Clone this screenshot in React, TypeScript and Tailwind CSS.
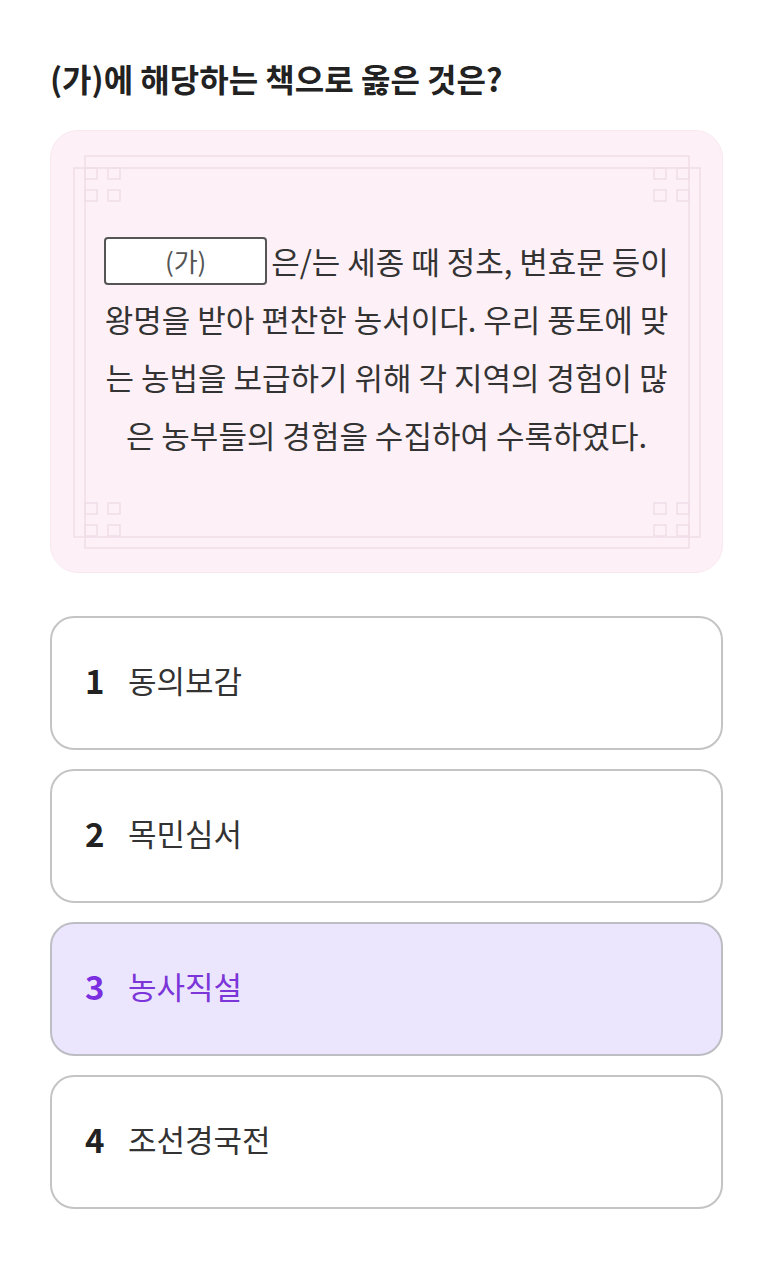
import React from 'react';

const options = [
  { no: 1, label: '동의보감' },
  { no: 2, label: '목민심서' },
  { no: 3, label: '농사직설', selected: true },
  { no: 4, label: '조선경국전' },
];

function Knot({ x, y }: { x: number; y: number }) {
  return (
    <g>
      <rect x={x} y={y} width={12} height={11} />
      <rect x={x + 23} y={y} width={12} height={11} />
      <rect x={x} y={y + 22} width={12} height={11} />
      <rect x={x + 23} y={y + 22} width={12} height={11} />
    </g>
  );
}

function Frame() {
  return (
    <svg
      className="pointer-events-none absolute inset-0"
      width="672"
      height="443"
      viewBox="0 0 672 443"
      fill="none"
      stroke="#f0dde7"
      strokeWidth="1.5"
    >
      <rect x="34" y="25" width="604" height="392" />
      <rect x="23" y="37" width="626" height="369" />
      <Knot x={34} y={37} />
      <Knot x={603} y={37} />
      <Knot x={34} y={372} />
      <Knot x={603} y={372} />
    </svg>
  );
}

export default function App() {
  return (
    <div
      className="min-h-screen bg-white px-[50px] pt-[56px] pb-10"
      style={{ fontFamily: '"Noto Sans CJK KR", "Noto Sans", sans-serif' }}
    >
      <h1 className="text-[32px] font-bold leading-[44px] text-[#222]">
        (가)에 해당하는 책으로 옳은 것은?
      </h1>

      <div className="relative mt-[30px] flex h-[443px] items-center justify-center rounded-[28px] border border-[#fae8f1] bg-[#fdf1f7] pb-[7px]">
        <Frame />
        <div className="relative text-center text-[31px] leading-[58px] text-[#333]">
          <div className="flex h-[58px] items-center justify-center">
            <span className="mr-[4px] inline-flex h-[48px] w-[163px] items-center justify-center rounded-[4px] border-2 border-[#555] bg-white text-[26px] leading-none text-[#555]">
              (가)
            </span>
            <span>은/는 세종 때 정초, 변효문 등이</span>
          </div>
          <div className="h-[58px]">왕명을 받아 편찬한 농서이다. 우리 풍토에 맞</div>
          <div className="h-[58px]">는 농법을 보급하기 위해 각 지역의 경험이 많</div>
          <div className="h-[58px]">은 농부들의 경험을 수집하여 수록하였다.</div>
        </div>
      </div>

      <div className="mt-[43px] flex flex-col gap-[19px]">
        {options.map((o) => (
          <div
            key={o.no}
            className={
              o.selected
                ? 'flex h-[134px] items-center gap-[22px] rounded-[24px] border-2 border-[#bdbdc4] bg-[#ebe6fe] pb-[5px] pl-[33px] text-[#7b2fe0]'
                : 'flex h-[134px] items-center gap-[22px] rounded-[24px] border-2 border-[#c4c4c4] bg-white pb-[5px] pl-[33px] text-[#222]'
            }
          >
            <span className="w-[21px] text-[33px] font-bold leading-none">{o.no}</span>
            <span className={o.selected ? 'text-[31px] text-[#7b35d8]' : 'text-[31px] text-[#333]'}>
              {o.label}
            </span>
          </div>
        ))}
      </div>
    </div>
  );
}
